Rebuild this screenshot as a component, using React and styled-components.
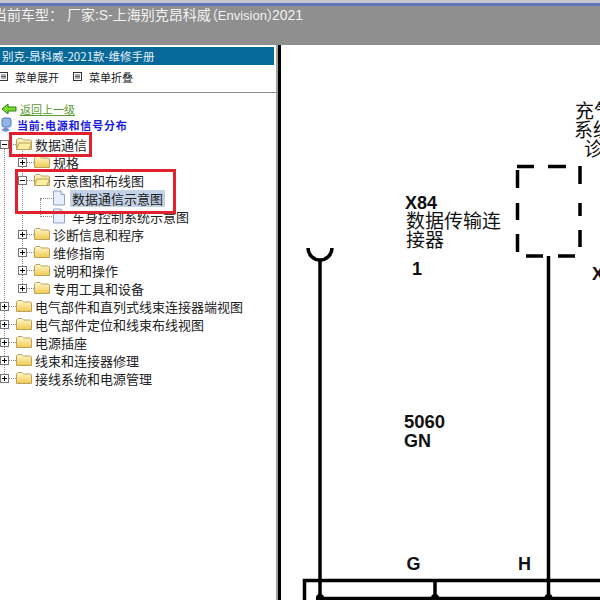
import React from "react";
import styled, { createGlobalStyle } from "styled-components";

const GlobalStyle = createGlobalStyle`
  html, body { margin: 0; padding: 0; background: #fff; }
  body { font-family: "Liberation Sans", "Noto Sans CJK SC", sans-serif; }
  * { box-sizing: border-box; }
`;

const CJK = `"Noto Sans CJK SC", "Liberation Sans", sans-serif`;

const Page = styled.div`
  width: 600px;
  height: 600px;
  overflow: hidden;
  display: flex;
  flex-direction: column;
`;

const Header = styled.header`
  height: 45px;
  flex: none;
  background: #8f8f8f;
  border-top: 3px solid #c4c6d2;
  box-shadow: inset 0 3px 0 #5f75ba;
  padding-top: 3px;
  color: #f2f2f2;
  font-size: 14px;
  line-height: 16px;
  white-space: nowrap;
`;

const HeaderText = styled.div`
  margin-left: -7px;
`;

const Paren = styled.span`
  font-family: ${CJK};
  font-feature-settings: "palt";
  margin-right: ${(p) => p.$mr || 0}px;
`;

const Latin = styled.span`
  font-size: 13px;
`;

const Body = styled.div`
  flex: 1;
  display: flex;
  min-height: 0;
`;

const Side = styled.aside`
  width: 276px;
  flex: none;
  padding-top: 2px;
  background: #fff;
  overflow: hidden;
`;

const Divider = styled.div`
  width: 5px;
  flex: none;
  background: #000;
  border-left: 2px solid #a0a0a0;
`;

const Canvas = styled.main`
  flex: 1;
  position: relative;
  overflow: hidden;
`;

const TitleBar = styled.div`
  width: 274px;
  height: 18px;
  background: #07689a;
  color: #e8f2f6;
  font-size: 11.5px;
  line-height: 18px;
  padding-left: 2px;
  font-family: ${CJK};
  white-space: nowrap;
`;

const MenuBar = styled.div`
  height: 28px;
  display: flex;
  align-items: center;
  border-bottom: 1px solid #8a8a8a;
  font-size: 11px;
  color: #222;
  font-family: ${CJK};
  padding-bottom: 4px;
`;

const MenuItem = styled.span`
  display: inline-flex;
  align-items: center;
  gap: 7px;
  margin-right: 14px;
  margin-left: ${(p) => p.$ml || 0}px;
`;

const BackRow = styled.div`
  height: 16px;
  margin-top: 8px;
  display: flex;
  align-items: center;
  gap: 3px;
  padding-left: 1px;
`;

const BackLink = styled.a`
  color: #5a9a2e;
  font-size: 11px;
  text-decoration: underline;
  font-family: ${CJK};
`;

const CurrentRow = styled.div`
  height: 16px;
  display: flex;
  align-items: center;
  gap: 5px;
  color: #1a1ae0;
  font-weight: 700;
  font-size: 11px;
  letter-spacing: 0.8px;
  font-family: ${CJK};
  white-space: nowrap;
`;

const Tree = styled.ul`
  list-style: none;
  margin: 2px 0 0;
  padding: 0;
  position: relative;
`;

const Row = styled.li`
  height: 18px;
  display: flex;
  align-items: center;
  padding-left: ${(p) => p.$depth * 18}px;
  font-size: 13px;
  color: #222;
  font-family: ${CJK};
  white-space: nowrap;
  position: relative;

  &::before {
    content: "";
    position: absolute;
    left: ${(p) => p.$depth * 18 + 4}px;
    top: 9px;
    width: 12px;
    border-top: 1px dotted #888;
  }
`;

const Toggle = styled.span`
  width: 9px;
  height: 9px;
  flex: none;
  border: 1px solid #777;
  background: #fff;
  position: relative;
  margin-right: 7px;
  z-index: 1;

  &::before {
    content: "";
    position: absolute;
    left: 1px;
    top: 3px;
    width: 5px;
    height: 1px;
    background: #000;
  }

  &::after {
    content: "";
    display: ${(p) => (p.$open ? "none" : "block")};
    position: absolute;
    left: 3px;
    top: 1px;
    width: 1px;
    height: 5px;
    background: #000;
  }
`;

const Spacer = styled.span`
  width: 16px;
  flex: none;
`;

const Label = styled.span`
  padding: 0 2px;
  background: ${(p) => (p.$selected ? "#c3d2e6" : "transparent")};
  line-height: 17px;
`;

const GuideLine = styled.div`
  position: absolute;
  left: ${(p) => p.$left}px;
  top: ${(p) => p.$top}px;
  height: ${(p) => p.$height}px;
  border-left: 1px dotted #888;
`;

const Highlight = styled.div`
  position: absolute;
  border: 3px solid #e0212e;
  pointer-events: none;
  left: ${(p) => p.$left}px;
  top: ${(p) => p.$top}px;
  width: ${(p) => p.$width}px;
  height: ${(p) => p.$height}px;
`;

const Diagram = styled.svg`
  position: absolute;
  left: 0;
  top: 0;
  display: block;
`;

const Wires = styled.g`
  stroke: #000;
  fill: none;
  stroke-width: 3.5;
`;

const BoldText = styled.text`
  font-family: "Liberation Sans", sans-serif;
  font-weight: 700;
  font-size: ${(p) => p.$size || 18}px;
  fill: #111;
`;

const CjkText = styled.text`
  font-family: ${CJK};
  font-size: 19px;
  fill: #111;
`;

const FolderSvg = styled.svg`
  flex: none;
  margin-right: 1px;
`;

const PageSvg = styled.svg`
  flex: none;
  margin-right: 4px;
`;

const Folder = ({ open }) => (
  <FolderSvg width="16" height="14" viewBox="0 0 16 14">
    <defs>
      <linearGradient id="folderFill" x1="0" y1="0" x2="0" y2="1">
        <stop offset="0" stopColor="#fff8cf" />
        <stop offset="1" stopColor="#f1c94c" />
      </linearGradient>
    </defs>
    <path d="M.5 12.5V3l1.5-1.5h4L7.5 3h7l1 1v8.5z" fill="url(#folderFill)" stroke="#b9a260" />
    {open && <path d="M.5 12.5 3 6h12.5L13 12.5z" fill="#fdeea0" stroke="#b9a260" />}
  </FolderSvg>
);

const PageIcon = () => (
  <PageSvg width="14" height="16" viewBox="0 0 14 16">
    <path d="M1.5 1h7.5l3.5 3.5V15h-11z" fill="#e9effa" stroke="#8ea4c8" />
    <path d="M9 1v3.5h3.5" fill="#fff" stroke="#8ea4c8" />
  </PageSvg>
);

const ArrowIcon = () => (
  <svg width="16" height="12" viewBox="0 0 16 12">
    <path d="M1 6 7 1v3h8v4H7v3z" fill="#7cdc2a" stroke="#2c7a14" />
  </svg>
);

const ComputerIcon = () => (
  <svg width="12" height="16" viewBox="0 0 12 16">
    <rect x="2" y="1" width="9" height="9" rx="2" fill="#8fb4e8" stroke="#5578b8" />
    <path d="M1 13l5-3 4 3-4 2z" fill="#6d8fcf" />
  </svg>
);

const MenuIcon = () => (
  <svg width="9" height="9" viewBox="0 0 9 9">
    <rect x="0.5" y="0.5" width="8" height="8" fill="#fff" stroke="#333" />
    <path d="M2 3h5M2 4.5h5M2 6h5" stroke="#333" strokeWidth="0.8" />
  </svg>
);

const treeRows = [
  { depth: 0, open: true, folder: true, text: "数据通信" },
  { depth: 1, folder: true, text: "规格" },
  { depth: 1, open: true, folder: true, text: "示意图和布线图" },
  { depth: 2, text: "数据通信示意图", selected: true },
  { depth: 2, text: "车身控制系统示意图" },
  { depth: 1, folder: true, text: "诊断信息和程序" },
  { depth: 1, folder: true, text: "维修指南" },
  { depth: 1, folder: true, text: "说明和操作" },
  { depth: 1, folder: true, text: "专用工具和设备" },
  { depth: 0, folder: true, text: "电气部件和直列式线束连接器端视图" },
  { depth: 0, folder: true, text: "电气部件定位和线束布线视图" },
  { depth: 0, folder: true, text: "电源插座" },
  { depth: 0, folder: true, text: "线束和连接器修理" },
  { depth: 0, folder: true, text: "接线系统和电源管理" },
];

// canvas starts at x=281, y=45 so the viewBox keeps picture coordinates
const WiringDiagram = () => (
  <Diagram width="319" height="555" viewBox="281 45 319 555">
    <Wires>
      <path d="M308 248a12 12 0 0 0 24 0" />
      <path d="M320 259V600" />
      <path d="M548.5 256V600" />
      <path d="M517 166.5h17M548 166.5h18M517.5 170v18M517.5 203v17M517.5 234v18M526 256h17M558 256h17M580 166v18M580 203v13M580 230v17" />
      <path d="M304.5 600V580.5H600" />
      <path d="M316 598.5H600" />
      <path d="M435 581v16" />
    </Wires>
    <circle cx="320" cy="598" r="4" fill="#000" />
    <circle cx="435" cy="598" r="4" fill="#000" />
    <circle cx="548.5" cy="598" r="4" fill="#000" />
    <BoldText x="405" y="209">X84</BoldText>
    <CjkText x="406" y="228">数据传输连</CjkText>
    <CjkText x="406" y="247">接器</CjkText>
    <BoldText x="412" y="275">1</BoldText>
    <BoldText x="592" y="280">X</BoldText>
    <CjkText x="575" y="118">充气</CjkText>
    <CjkText x="574" y="137">系统</CjkText>
    <CjkText x="584" y="156">诊断</CjkText>
    <BoldText x="404" y="428" $size={18.5}>5060</BoldText>
    <BoldText x="404" y="447">GN</BoldText>
    <BoldText x="406.5" y="570">G</BoldText>
    <BoldText x="518" y="570">H</BoldText>
  </Diagram>
);

export default function App() {
  return (
    <Page>
      <GlobalStyle />
      <Header>
        <HeaderText>
          当前车型： 厂家:S-上海别克昂科威<Paren>（</Paren><Latin>Envision</Latin><Paren $mr={-2}>）</Paren>2021
        </HeaderText>
      </Header>
      <Body>
        <Side>
          <TitleBar>别克-昂科威-2021款-维修手册</TitleBar>
          <MenuBar>
            <MenuItem $ml={-1}><MenuIcon />菜单展开</MenuItem>
            <MenuItem><MenuIcon />菜单折叠</MenuItem>
          </MenuBar>
          <BackRow><ArrowIcon /><BackLink>返回上一级</BackLink></BackRow>
          <CurrentRow><ComputerIcon />当前:电源和信号分布</CurrentRow>
          <Tree>
            <GuideLine $left={4} $top={14} $height={229} />
            <GuideLine $left={22} $top={14} $height={139} />
            <GuideLine $left={40} $top={64} $height={18} />
            {treeRows.map((r) => (
              <Row key={r.text} $depth={r.depth}>
                {r.folder ? <Toggle $open={r.open} /> : <Spacer />}
                {r.folder ? <Folder open={r.open} /> : <PageIcon />}
                <Label $selected={r.selected}>{r.text}</Label>
              </Row>
            ))}
            <Highlight $left={9} $top={-3} $width={83} $height={25} />
            <Highlight $left={15} $top={34} $width={161} $height={45} />
          </Tree>
        </Side>
        <Divider />
        <Canvas><WiringDiagram /></Canvas>
      </Body>
    </Page>
  );
}
